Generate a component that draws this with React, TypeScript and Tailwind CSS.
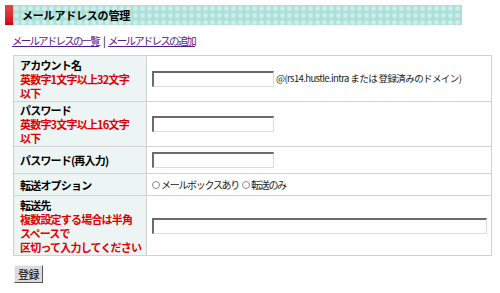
import React from 'react'

const jp = 'font-["Noto_Sans_CJK_JP","Noto_Sans_JP",sans-serif]'

function TextInput({ width }: { width: string }) {
  return (
    <input
      type="text"
      className={`${width} h-[16px] bg-white border-t-2 border-l-2 border-b border-r border-t-[#6b6b6b] border-l-[#6b6b6b] border-b-[#dcdcdc] border-r-[#dcdcdc] outline-none block`}
    />
  )
}

function Radio({ label }: { label: string }) {
  return (
    <span className="inline-flex items-center">
      <span className="w-[8px] h-[8px] rounded-full border border-[#8a8a8a] bg-white mr-[1px]" />
      <span>{label}</span>
    </span>
  )
}

export default function App() {
  const labelCell = 'w-[133px] max-w-[133px] bg-[#edf5f4] border border-[#d2d2d2] align-middle pl-[6px] pr-0 text-[11px] leading-[14px] font-bold text-black whitespace-nowrap tracking-[-0.8px]'
  const valueCell = 'border border-[#d2d2d2] align-middle pl-[5px] pr-[4px]'
  const red = 'block text-[#e00000]'

  return (
    <div className={`w-[500px] h-[293px] bg-white ${jp} text-black`}>
      <div className="pt-[5px] pl-[5px]">
        <div className="flex w-[457px] h-[20px]">
          <div className="w-[8px] h-full bg-gradient-to-b from-[#e2474d] to-[#cc0010]" />
          <div className="flex-1 flex items-center pl-[9px] bg-[#ade0d9] bg-[radial-gradient(circle,#cdeeea_42%,transparent_48%)] bg-[length:7px_7px]">
            <span className="text-[11px] font-bold tracking-[-0.2px]">メールアドレスの管理</span>
          </div>
        </div>
      </div>

      <div className="pl-[12px] mt-[9px] text-[10.5px] leading-[13px] tracking-[-1.8px] text-[#551a8b]">
        <a href="#" className="underline">メールアドレスの一覧</a>
        <span className="text-black mx-[4px]">|</span>
        <a href="#" className="underline">メールアドレスの追加</a>
      </div>

      <table className="ml-[13px] mt-[8px] w-[479px] border-collapse border border-[#c8c8c8]">
        <tbody>
          <tr className="h-[46px]">
            <td className={labelCell}>
              <span className="block">アカウント名</span>
              <span className={red}>英数字1文字以上32文字</span>
              <span className={red}>以下</span>
            </td>
            <td className={valueCell}>
              <div className="flex items-center">
                <TextInput width="w-[122px]" />
                <span className="ml-[2px] text-[9.5px] tracking-[-0.6px] text-[#222]">@(rs14.hustle.intra または 登録済みのドメイン)</span>
              </div>
            </td>
          </tr>
          <tr className="h-[45px]">
            <td className={labelCell}>
              <span className="block">パスワード</span>
              <span className={red}>英数字3文字以上16文字</span>
              <span className={red}>以下</span>
            </td>
            <td className={valueCell}>
              <TextInput width="w-[122px]" />
            </td>
          </tr>
          <tr className="h-[27px]">
            <td className={labelCell}>パスワード(再入力)</td>
            <td className={valueCell}>
              <TextInput width="w-[122px]" />
            </td>
          </tr>
          <tr className="h-[22px]">
            <td className={labelCell}>転送オプション</td>
            <td className={valueCell}>
              <div className="flex items-center gap-[3px] text-[10px] tracking-[-1.3px] text-[#222]">
                <Radio label="メールボックスあり" />
                <Radio label="転送のみ" />
              </div>
            </td>
          </tr>
          <tr className="h-[60px]">
            <td className={labelCell}>
              <span className="block">転送先</span>
              <span className={red}>複数設定する場合は半角</span>
              <span className={red}>スペースで</span>
              <span className={red}>区切って入力してください</span>
            </td>
            <td className={valueCell}>
              <TextInput width="w-[335px]" />
            </td>
          </tr>
        </tbody>
      </table>

      <div className="pl-[14px] mt-[4px]">
        <button className="h-[18px] px-[3px] bg-[#dcdcdc] border border-t-[#f4f4f4] border-l-[#f4f4f4] border-b-[#555] border-r-[#555] text-[11px] leading-[14px] tracking-[-0.5px]">
          登録
        </button>
      </div>
    </div>
  )
}
